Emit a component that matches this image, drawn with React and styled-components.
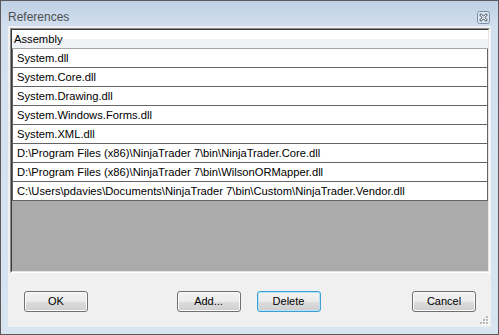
import styled, { createGlobalStyle } from "styled-components";

const GlobalStyle = createGlobalStyle`
  html, body {
    margin: 0;
    padding: 0;
    background: #ffffff;
  }
  * {
    box-sizing: border-box;
  }
`;

const assemblies = [
  "System.dll",
  "System.Core.dll",
  "System.Drawing.dll",
  "System.Windows.Forms.dll",
  "System.XML.dll",
  "D:\\Program Files (x86)\\NinjaTrader 7\\bin\\NinjaTrader.Core.dll",
  "D:\\Program Files (x86)\\NinjaTrader 7\\bin\\WilsonORMapper.dll",
  "C:\\Users\\pdavies\\Documents\\NinjaTrader 7\\bin\\Custom\\NinjaTrader.Vendor.dll",
];

export default function App() {
  return (
    <>
      <GlobalStyle />
      <Window>
        <TitleBar>
          <Title>References</Title>
          <CloseButton aria-label="Close">
            <svg width="13" height="13" viewBox="0 0 13 13">
              <rect x="0.5" y="0.5" width="12" height="12" rx="2" fill="#dce6f2" stroke="#7d8ea8" />
              <path d="M4 4 L9 9 M9 4 L4 9" stroke="#3e4a5c" strokeWidth="2.6" strokeLinecap="square" />
              <path d="M4 4 L9 9 M9 4 L4 9" stroke="#ffffff" strokeWidth="1.1" strokeLinecap="square" />
            </svg>
          </CloseButton>
        </TitleBar>
        <Frame>
          <Client>
            <Grid>
              <GridInner>
                <HeaderCell>Assembly</HeaderCell>
                {assemblies.map((name) => (
                  <Row key={name}>{name}</Row>
                ))}
                <EmptyArea />
              </GridInner>
            </Grid>
            <Footer>
              <Left>
                <Button>OK</Button>
              </Left>
              <Middle>
                <Button>Add...</Button>
                <Button $focused>Delete</Button>
              </Middle>
              <Right>
                <Button>Cancel</Button>
              </Right>
            </Footer>
            <SizeGrip>
              <svg width="10" height="10" viewBox="0 0 10 10">
                {[
                  [7, 1],
                  [4, 4],
                  [7, 4],
                  [1, 7],
                  [4, 7],
                  [7, 7],
                ].map(([x, y]) => (
                  <g key={`${x}-${y}`}>
                    <rect x={x + 1} y={y + 1} width="2" height="2" fill="#ffffff" />
                    <rect x={x} y={y} width="2" height="2" fill="#b8b8b8" />
                  </g>
                ))}
              </svg>
            </SizeGrip>
          </Client>
        </Frame>
      </Window>
    </>
  );
}

const Window = styled.div`
  width: 499px;
  height: 335px;
  border: 1px solid #5a5a5a;
  background: linear-gradient(#bfd0e5 0px, #d2dfee 26px, #d9e4f1 100%);
  display: flex;
  flex-direction: column;
  font-family: "Liberation Sans", Arial, sans-serif;
`;

const TitleBar = styled.div`
  height: 25px;
  display: flex;
  justify-content: space-between;
  align-items: flex-start;
  padding: 10px 8px 0 7px;
`;

const Title = styled.div`
  font-size: 12px;
  line-height: 12px;
  color: #4f4f4f;
`;

const CloseButton = styled.div`
  width: 13px;
  height: 13px;
  display: flex;
`;

const Frame = styled.div`
  flex: 1;
  padding: 0 7px 7px 7px;
  display: flex;
`;

const Client = styled.div`
  position: relative;
  flex: 1;
  background: #f0f0f0;
  padding: 2px 1px 0 2px;
  display: flex;
  flex-direction: column;
`;

const Grid = styled.div`
  height: 245px;
  border: 1px solid;
  border-color: #8a8a8a #ffffff #ffffff #8a8a8a;
  display: flex;
`;

const GridInner = styled.div`
  flex: 1;
  border: 1px solid;
  border-color: #3c3c3c #e3e3e3 #e3e3e3 #3c3c3c;
  display: flex;
  flex-direction: column;
  font-size: 11.2px;
  color: #000000;
`;

const HeaderCell = styled.div`
  height: 19px;
  line-height: 18px;
  padding-left: 2px;
  background: linear-gradient(#ffffff 0, #ffffff 50%, #f1f2f4 50%, #f1f2f4 100%);
  border-bottom: 1px solid #a6a6a6;
  white-space: nowrap;
`;

const Row = styled.div`
  height: 19px;
  line-height: 18px;
  padding-left: 4px;
  background: #ffffff;
  border-left: 1px solid #646464;
  border-right: 1px solid #646464;
  border-bottom: 1px solid #646464;
  white-space: nowrap;
  overflow: hidden;
`;

const EmptyArea = styled.div`
  flex: 1;
  background: #ababab;
`;

const Footer = styled.div`
  display: grid;
  grid-template-columns: 1fr auto 1fr;
  align-items: start;
  padding: 18px 14px 0 14px;
`;

const Left = styled.div`
  display: flex;
  justify-content: flex-start;
`;

const Middle = styled.div`
  display: flex;
  gap: 16px;
  margin-right: 3px;
`;

const Right = styled.div`
  display: flex;
  justify-content: flex-end;
`;

const Button = styled.button`
  width: 64px;
  height: 21px;
  padding: 0;
  border-radius: 3px;
  border: 1px solid ${(p) => (p.$focused ? "#3c9fd6" : "#707070")};
  box-shadow: ${(p) =>
    p.$focused ? "inset 0 0 0 1px #b7e3f7" : "inset 0 0 0 1px #fbfbfb"};
  background: linear-gradient(#f2f2f2 0%, #ebebeb 50%, #dddddd 50%, #cfcfcf 100%);
  font-family: "Liberation Sans", Arial, sans-serif;
  font-size: 11px;
  color: #000000;
  line-height: 19px;
`;

const SizeGrip = styled.div`
  position: absolute;
  right: 2px;
  bottom: 2px;
  width: 10px;
  height: 10px;
  display: flex;
`;
